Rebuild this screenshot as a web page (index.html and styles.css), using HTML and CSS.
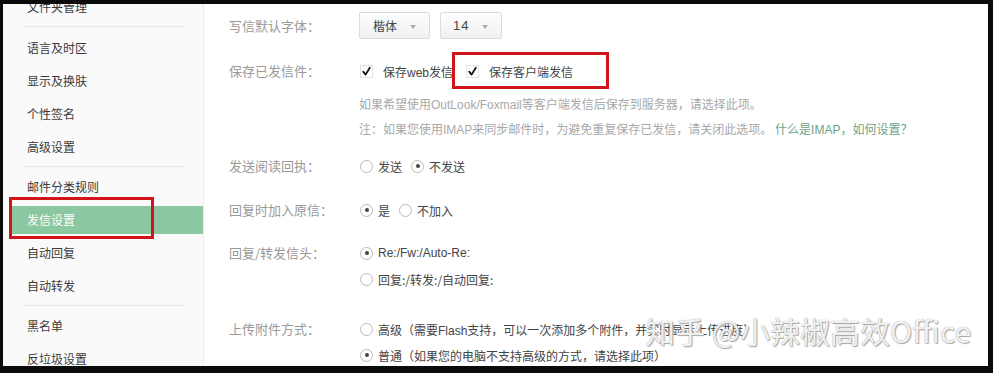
FILE: index.html
```html
<!DOCTYPE html>
<html lang="zh-CN">
<head>
<meta charset="utf-8">
<title>发信设置</title>
<link rel="stylesheet" href="styles.css">
</head>
<body>
<div class="frame">
  <aside class="side">
    <ul class="menu first">
      <li class="item">文件夹管理</li>
    </ul>
    <div class="divider d1"></div>
    <ul class="menu">
      <li class="item">语言及时区</li>
      <li class="item">显示及换肤</li>
      <li class="item">个性签名</li>
      <li class="item">高级设置</li>
    </ul>
    <div class="divider"></div>
    <ul class="menu">
      <li class="item">邮件分类规则</li>
      <li class="item active"><span class="mark-side"></span>发信设置</li>
      <li class="item">自动回复</li>
      <li class="item">自动转发</li>
    </ul>
    <div class="divider"></div>
    <ul class="menu">
      <li class="item">黑名单</li>
      <li class="item">反垃圾设置</li>
    </ul>
  </aside>
  <main class="main">
    <div class="row r1">
      <div class="label">写信默认字体：</div>
      <div class="ctrl">
        <div class="selects">
          <div class="select s1"><span>楷体</span><i class="caret"></i></div>
          <div class="select s2"><span class="num">14</span><i class="caret"></i></div>
        </div>
      </div>
    </div>
    <div class="row r2">
      <div class="label">保存已发信件：</div>
      <div class="ctrl">
        <div class="line">
          <label class="opt"><span class="cb"><svg viewBox="0 0 13 13" width="13" height="13"><path d="M3.2 6.6 L5.6 9.6 L9.8 2.8" fill="none" stroke="#111" stroke-width="1.8" stroke-linecap="round" stroke-linejoin="round"/></svg></span><span class="t">保存<span class="lat">web</span>发信</span></label>
          <label class="opt opt2"><span class="mark-box"></span><span class="cb"><svg viewBox="0 0 13 13" width="13" height="13"><path d="M3.2 6.6 L5.6 9.6 L9.8 2.8" fill="none" stroke="#111" stroke-width="1.8" stroke-linecap="round" stroke-linejoin="round"/></svg></span><span class="t">保存客户端发信</span></label>
        </div>
        <div class="hint h1">如果希望使用<span class="lat">OutLook/Foxmail</span>等客户端发信后保存到服务器，请选择此项。</div>
        <div class="hint">注：如果您使用<span class="lat">IMAP</span>来同步邮件时，为避免重复保存已发信，请关闭此选项。 <a class="link">什么是<span class="lat">IMAP</span>，如何设置？</a></div>
      </div>
    </div>
    <div class="row r5">
      <div class="label">发送阅读回执：</div>
      <div class="ctrl">
        <div class="line">
          <label class="opt"><span class="rd"></span><span class="t">发送</span></label>
          <label class="opt"><span class="rd on"></span><span class="t">不发送</span></label>
        </div>
      </div>
    </div>
    <div class="row r6">
      <div class="label">回复时加入原信：</div>
      <div class="ctrl">
        <div class="line">
          <label class="opt"><span class="rd on"></span><span class="t">是</span></label>
          <label class="opt"><span class="rd"></span><span class="t">不加入</span></label>
        </div>
      </div>
    </div>
    <div class="row r7">
      <div class="label">回复/转发信头：</div>
      <div class="ctrl">
        <div class="line"><label class="opt"><span class="rd on"></span><span class="t lat">Re:/Fw:/Auto-Re:</span></label></div>
        <div class="line"><label class="opt"><span class="rd"></span><span class="t">回复:/转发:/自动回复:</span></label></div>
      </div>
    </div>
    <div class="row r8">
      <div class="label">上传附件方式：</div>
      <div class="ctrl">
        <div class="line"><label class="opt"><span class="rd"></span><span class="t">高级（需要<span class="lat">Flash</span>支持，可以一次添加多个附件，并实时显示上传进度）</span></label></div>
        <div class="line"><label class="opt"><span class="rd on"></span><span class="t">普通（如果您的电脑不支持高级的方式，请选择此项）</span></label></div>
      </div>
    </div>
    <div class="watermark">知乎 @小辣椒高效Office</div>
  </main>
</div>
</body>
</html>
```
FILE: styles.css
```css
* { box-sizing: border-box; }
html, body { margin: 0; padding: 0; }
body {
  background: #0b0b0b;
  padding: 4px 5px 7px 3px;
  width: 993px;
  height: 373px;
  overflow: hidden;
  font-family: "Noto Sans CJK SC", "Liberation Sans", sans-serif;
}
.frame {
  display: flex;
  width: 985px;
  height: 362px;
  overflow: hidden;
  background: #fff;
}
.side {
  width: 201px;
  flex: none;
  background: #fafafa;
  border-right: 1px solid #ececec;
  padding-left: 7px;
}
.menu { list-style: none; margin: 0; padding: 0; }
.menu.first { margin-top: -11px; }
.item {
  position: relative;
  height: 28px;
  line-height: 28px;
  margin-bottom: 5px;
  padding-left: 17px;
  font-size: 12px;
  color: #3a3a3a;
}
.item.active { background: #8bc7a0; color: #fff; }
.mark-side {
  position: absolute;
  left: -1px;
  top: -9px;
  width: 145px;
  height: 42px;
  border: 3px solid #d0141a;
}
.divider {
  height: 1px;
  background: #e6e6e6;
  margin: 2px 18px 6px 14px;
}
.divider.d1 { margin-top: 1px; margin-bottom: 7px; }
.main {
  position: relative;
  flex: 1;
  padding-left: 25px;
}
.row { display: flex; align-items: flex-start; }
.label {
  width: 131px;
  flex: none;
  font-size: 13px;
  line-height: 20px;
  color: #999;
}
.ctrl { display: flex; flex-direction: column; gap: 6px; }
.r1 { margin-top: 8px; align-items: center; }
.r2 { margin-top: 22px; }
.r5 { margin-top: 14px; }
.r6 { margin-top: 24px; }
.r7 { margin-top: 23px; }
.r8 { margin-top: 30px; }
.selects { display: flex; gap: 10px; margin-left: -1px; }
.select {
  height: 27px;
  display: flex;
  align-items: center;
  justify-content: space-between;
  padding: 0 13px;
  border: 1px solid #dcdcdc;
  border-radius: 2px;
  background: linear-gradient(#fdfdfd, #f1f1f1);
  font-size: 12px;
  color: #444;
}
.s1 { width: 71px; }
.s2 { width: 62px; padding-left: 12px; }
.num { font-family: "Liberation Sans", sans-serif; font-size: 13px; letter-spacing: 1px; }
.caret {
  width: 0; height: 0;
  border-left: 3.5px solid transparent;
  border-right: 3.5px solid transparent;
  border-top: 4px solid #aaa;
  margin-top: 2px;
}
.line { display: flex; align-items: center; height: 20px; gap: 9px; }
.opt {
  position: relative;
  display: flex;
  align-items: center;
  gap: 5px;
  font-size: 12px;
  color: #444;
  white-space: nowrap;
}
.lat { font-family: "Liberation Sans", sans-serif; }
.cb {
  width: 13px; height: 13px;
  border: 1px solid #e2e2e2;
  background: #fff;
  display: inline-flex;
  margin-right: 5px;
}
.cb svg { margin: -1px; }
.r2 .line { gap: 13px; }
.mark-box {
  position: absolute;
  left: -14px;
  top: -11px;
  width: 157px;
  height: 37px;
  border: 3px solid #d0141a;
}
.rd {
  position: relative;
  width: 13px; height: 13px;
  border: 1px solid #b9b9b9;
  border-radius: 50%;
  background: #fff;
  flex: none;
}
.rd.on::after {
  content: "";
  position: absolute;
  left: 3.5px; top: 3.5px;
  width: 4px; height: 4px;
  border-radius: 50%;
  background: #444;
}
.hint {
  font-size: 12px;
  line-height: 24px;
  color: #a8a8a8;
  margin-left: -1px;
  white-space: nowrap;
}
.hint.h1 { margin-top: 5px; margin-bottom: -6px; }
.link { color: #6ea487; }
.watermark {
  position: absolute;
  left: 441px;
  top: 306px;
  font-size: 30px;
  line-height: 40px;
  color: rgba(255,255,255,0.9);
  text-shadow: 0 0 1px #888, 1px 1px 1px #aaa;
  white-space: nowrap;
  font-family: "Noto Sans CJK SC", "Liberation Sans", sans-serif;
}
```
